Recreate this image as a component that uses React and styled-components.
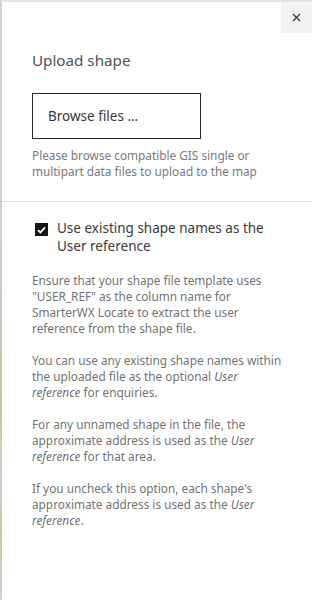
import React from 'react';
import styled, { createGlobalStyle } from 'styled-components';

const GlobalStyle = createGlobalStyle`
  html, body {
    margin: 0;
    padding: 0;
    background: #ffffff;
  }
  body {
    font-family: 'Noto Sans', 'Open Sans', sans-serif;
  }
`;

const Page = styled.div`
  display: flex;
  width: 312px;
  height: 600px;
  overflow: hidden;
`;

const MapEdge = styled.div`
  width: 2px;
  flex-shrink: 0;
  background: linear-gradient(
    to bottom,
    #d4d4d4 0%,
    #cfcfcf 40%,
    #b9c9a3 68%,
    #c8d4b4 74%,
    #cfcfcf 80%,
    #bdd0a0 88%,
    #d0d0d0 100%
  );
`;

const Panel = styled.div`
  flex: 1;
  display: flex;
  flex-direction: column;
  border-top: 2px solid #e4e4e4;
  background: #ffffff;
`;

const Header = styled.div`
  display: flex;
  justify-content: flex-end;
`;

const CloseButton = styled.button`
  width: 31px;
  height: 31px;
  border: none;
  padding: 0;
  background: #f2f2f2;
  display: flex;
  align-items: center;
  justify-content: center;
  cursor: pointer;
`;

const Section = styled.div`
  padding: 0 30px;
`;

const Title = styled.h2`
  margin: 16px 0 0;
  font-size: 15.2px;
  line-height: 22px;
  font-weight: 400;
  color: #525252;
`;

const BrowseButton = styled.button`
  margin-top: 22px;
  width: 169px;
  height: 46px;
  box-sizing: border-box;
  border: 1.5px solid #262626;
  background: #ffffff;
  text-align: left;
  padding: 0 15px;
  font-family: inherit;
  font-size: 13.5px;
  color: #393939;
  cursor: pointer;
`;

const Helper = styled.p`
  margin: 8px 0 22px;
  font-size: 11.8px;
  line-height: 16px;
  color: #7a7a7a;
`;

const Divider = styled.hr`
  margin: 0;
  border: none;
  border-top: 1px solid #e0e0e0;
`;

const CheckRow = styled.label`
  display: flex;
  align-items: flex-start;
  gap: 9px;
  margin-top: 18px;
  padding-left: 3px;
  cursor: pointer;
`;

const Box = styled.span`
  flex-shrink: 0;
  width: 13px;
  height: 13px;
  margin-top: 3px;
  background: #161616;
  display: flex;
  align-items: center;
  justify-content: center;
`;

const CheckLabel = styled.span`
  font-size: 13.5px;
  line-height: 17.5px;
  color: #393939;
`;

const Body = styled.p`
  margin: ${(p) => (p.first ? '17px' : '16px')} 0 0;
  font-size: 11.8px;
  line-height: 16px;
  color: #737373;

  em {
    font-style: italic;
  }
`;

export default function App() {
  return (
    <>
      <GlobalStyle />
      <Page>
        <MapEdge />
        <Panel>
          <Header>
            <CloseButton aria-label="Close">
              <svg width="9" height="9" viewBox="0 0 9 9">
                <path d="M1 1 L8 8 M8 1 L1 8" stroke="#393939" strokeWidth="1.3" />
              </svg>
            </CloseButton>
          </Header>
          <Section>
            <Title>Upload shape</Title>
            <BrowseButton>Browse files ...</BrowseButton>
            <Helper>
              Please browse compatible GIS single or multipart data files to upload to the map
            </Helper>
          </Section>
          <Divider />
          <Section>
            <CheckRow>
              <Box>
                <svg width="9" height="8" viewBox="0 0 9 8">
                  <path d="M1 4.2 L3.4 6.5 L8 1.3" stroke="#ffffff" strokeWidth="1.8" fill="none" />
                </svg>
              </Box>
              <CheckLabel>Use existing shape names as the User reference</CheckLabel>
            </CheckRow>
            <Body first>
              Ensure that your shape file template uses "USER_REF" as the column name for
              SmarterWX Locate to extract the user reference from the shape file.
            </Body>
            <Body>
              You can use any existing shape names within the uploaded file as the optional{' '}
              <em>User reference</em> for enquiries.
            </Body>
            <Body>
              For any unnamed shape in the file, the approximate address is used as the{' '}
              <em>User reference</em> for that area.
            </Body>
            <Body>
              If you uncheck this option, each shape's approximate address is used as the{' '}
              <em>User reference</em>.
            </Body>
          </Section>
        </Panel>
      </Page>
    </>
  );
}
